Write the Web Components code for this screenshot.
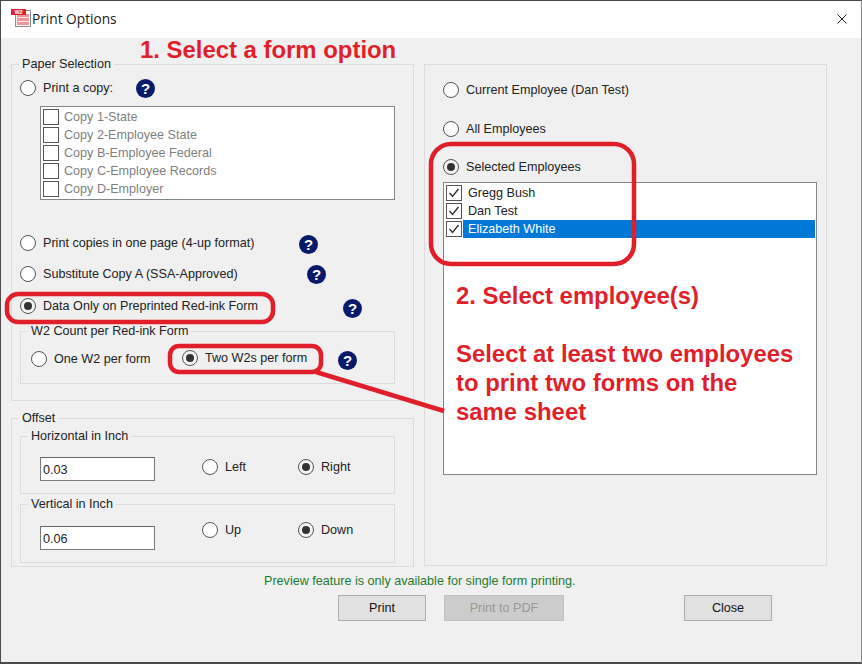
<!DOCTYPE html>
<html>
<head>
<meta charset="utf-8">
<title>Print Options</title>
<style>
html, body { margin: 0; padding: 0; background: #f0f0f0; }
body { font: 12.6px "Liberation Sans", Arial, sans-serif; color: #222; }
</style>
</head>
<body>
<print-dialog>
  <div slot="left">
    <win-group label="Paper Selection" pad="6px 18px 16px 8px">
      <win-row>
        <win-radio style="width:116px">Print a copy:</win-radio><win-help></win-help>
      </win-row>
      <check-list disabled style="margin:8px 0 0 20px;width:350px;height:91px">
        <check-item>Copy 1-State</check-item>
        <check-item>Copy 2-Employee State</check-item>
        <check-item>Copy B-Employee Federal</check-item>
        <check-item>Copy C-Employee Records</check-item>
        <check-item>Copy D-Employer</check-item>
      </check-list>
      <win-row style="margin-top:33px">
        <win-radio style="width:279px">Print copies in one page (4-up format)</win-radio><win-help style="margin-top:3px"></win-help>
      </win-row>
      <win-row style="margin-top:11px">
        <win-radio style="width:287px">Substitute Copy A (SSA-Approved)</win-radio><win-help></win-help>
      </win-row>
      <win-row style="margin-top:12px">
        <win-radio checked style="width:323px">Data Only on Preprinted Red-ink Form</win-radio><win-help style="margin-top:4px"></win-help>
      </win-row>
      <win-group label="W2 Count per Red-ink Form" style="margin-top:15px;height:51px">
        <win-row style="margin:10px 0 0 10px">
          <win-radio style="width:151px">One W2 per form</win-radio>
          <win-radio checked style="width:156px;margin-top:-2px">Two W2s per form</win-radio>
          <win-help style="margin-top:2px"></win-help>
        </win-row>
      </win-group>
    </win-group>
    <win-group label="Offset" pad="10px 18px 3px 8px" style="margin-top:17px">
      <win-group label="Horizontal in Inch" style="height:56px">
        <win-row style="margin:13px 0 0 19px;height:24px">
          <win-input style="width:115px">0.03</win-input>
          <win-radio style="width:96px;margin-left:47px;margin-top:-4px">Left</win-radio>
          <win-radio checked style="margin-top:-4px">Right</win-radio>
        </win-row>
      </win-group>
      <win-group label="Vertical in Inch" style="height:57px;margin-top:10px">
        <win-row style="margin:14px 0 0 19px;height:24px">
          <win-input style="width:115px">0.06</win-input>
          <win-radio style="width:96px;margin-left:47px;margin-top:-16px">Up</win-radio>
          <win-radio checked style="margin-top:-16px">Down</win-radio>
        </win-row>
      </win-group>
    </win-group>
  </div>
  <win-group slot="right" pad="15px 9px 0 18px" style="height:500px">
    <win-row><win-radio>Current Employee (Dan Test)</win-radio></win-row>
    <win-row style="margin-top:19px"><win-radio>All Employees</win-radio></win-row>
    <win-row style="margin-top:18px"><win-radio checked>Selected Employees</win-radio></win-row>
    <check-list style="margin-top:5px;width:369px;height:290px;--text-pad:5px">
      <check-item checked>Gregg Bush</check-item>
      <check-item checked>Dan Test</check-item>
      <check-item checked selected>Elizabeth White</check-item>
    </check-list>
  </win-group>
  <span slot="note">Preview feature is only available for single form printing.</span>
  <win-button slot="buttons" style="width:88px">Print</win-button>
  <win-button slot="buttons" disabled style="width:120px;margin-left:18px">Print to PDF</win-button>
  <win-button slot="buttons" style="width:88px;margin-left:120px">Close</win-button>
</print-dialog>
<help-notes></help-notes>

<script>
class PrintDialog extends HTMLElement {
  constructor() {
    super();
    const shadow = this.attachShadow({ mode: 'open' });
    shadow.innerHTML = `
    <style>
:host { display: block; width: 862px; height: 664px; box-sizing: border-box; background: #f0f0f0; border: 1px solid #4a4a4a; border-right-color: #8a8a8a; border-bottom-width: 2px; overflow: hidden; }
.title { height: 35px; padding-bottom: 2px; background: #fff; display: flex; align-items: center; padding-left: 10px; font: 13.7px "Open Sans", "Liberation Sans", sans-serif; color: #1a1a1a; }
.title svg { margin-right: 0; }
.title span { flex: 1; }
.x { width: 44px; display: flex; justify-content: center; margin-right: -3px; }
.columns { display: flex; gap: 10px; padding: 26px 0 0 10px; }
.columns > div { width: 403px; }
.note { margin: 7px 0 0 263px; height: 14px; line-height: 14px; color: #1c7c2e; }
.buttons { display: flex; margin: 7px 0 0 337px; }
    </style>
    <div class="title">
      <svg width="21" height="21" viewBox="0 0 21 21">
        <rect x="4.500" y="2.500" width="15" height="16" fill="#fff" stroke="#8c8c8c"/>
        <rect x="6" y="6" width="12" height="11" fill="#f0959b"/>
        <rect x="6" y="9" width="12" height="1" fill="#fbe3e4"/>
        <rect x="6" y="13" width="12" height="1" fill="#fbe3e4"/>
        <rect x="0" y="1" width="15" height="6" fill="#e0222c"/>
        <text x="7.500" y="6" font-size="5.500" font-weight="700" font-family="Liberation Sans" fill="#fff" text-anchor="middle">W2</text>
      </svg>
      <span>Print Options</span>
      <div class="x"><svg width="10" height="10" viewBox="0 0 10 10"><path d="M.5.5l9 9M9.500.5l-9 9" stroke="#222" fill="none"/></svg></div>
    </div>
    <div class="columns">
      <div><slot name="left"></slot></div>
      <div><slot name="right"></slot></div>
    </div>
    <div class="note"><slot name="note"></slot></div>
    <div class="buttons"><slot name="buttons"></slot></div>
    `;
  }
}

class WinGroup extends HTMLElement {
  constructor() {
    super();
    const shadow = this.attachShadow({ mode: 'open' });
    const label = this.getAttribute('label');
    const pad = this.getAttribute('pad') || '0';
    shadow.innerHTML = `
    <style>
:host { display: block; border: 1px solid #dcdcdc; }
.legend { display: table; margin: -9px 0 0 7px; padding: 0 3px; height: 16px; line-height: 16px; background: #f0f0f0; color: #222; }
.body { padding: ${pad}; }
    </style>
    ${label ? `<div class="legend">${label}</div>` : ''}
    <div class="body"><slot></slot></div>
    `;
  }
}

class WinRow extends HTMLElement {
  constructor() {
    super();
    const shadow = this.attachShadow({ mode: 'open' });
    shadow.innerHTML = `
    <style>
:host { display: flex; align-items: center; height: 20px; }
    </style>
    <slot></slot>
    `;
  }
}

class WinRadio extends HTMLElement {
  constructor() {
    super();
    const shadow = this.attachShadow({ mode: 'open' });
    shadow.innerHTML = `
    <style>
:host { display: flex; align-items: center; flex: none; white-space: nowrap; }
.dot { width: 16px; height: 16px; box-sizing: border-box; border: 1.5px solid #555; border-radius: 50%; background: #fff; margin-right: 7px; flex: none; display: flex; align-items: center; justify-content: center; }
.dot i { width: 8px; height: 8px; border-radius: 50%; background: #333; display: none; }
:host([checked]) .dot i { display: block; }
:host([checked]) .dot { background: #f4f4f4; }
    </style>
    <span class="dot"><i></i></span><slot></slot>
    `;
  }
}

class WinHelp extends HTMLElement {
  constructor() {
    super();
    const shadow = this.attachShadow({ mode: 'open' });
    shadow.innerHTML = `
    <style>
:host { display: flex; align-items: center; justify-content: center; flex: none; width: 19px; height: 19px; border-radius: 50%; background: #0a1a6a; color: #fff; font: bold 15px "Liberation Sans", sans-serif; }
    </style>
    ?
    `;
  }
}

class CheckList extends HTMLElement {
  constructor() {
    super();
    const shadow = this.attachShadow({ mode: 'open' });
    shadow.innerHTML = `
    <style>
:host { display: block; background: #fff; border: 1px solid #82878c; padding: 1px 1px 0 2px; }
:host([disabled]) { color: #808080; }
    </style>
    <slot></slot>
    `;
  }
}

class CheckItem extends HTMLElement {
  constructor() {
    super();
    const shadow = this.attachShadow({ mode: 'open' });
    shadow.innerHTML = `
    <style>
:host { display: flex; align-items: center; height: 18px; }
.box { width: 16px; height: 16px; box-sizing: border-box; border: 1px solid #555; background: #fff; flex: none; }
.box svg { display: none; }
:host([checked]) .box svg { display: block; }
.text { flex: 1; height: 18px; line-height: 18px; padding-left: var(--text-pad, 4px); margin-left: 1px; }
:host([selected]) .text { background: #0078d7; color: #fff; }
    </style>
    <span class="box"><svg width="14" height="14" viewBox="0 0 14 14"><path d="M2.500 7l3 3.500 6-7.500" fill="none" stroke="#333" stroke-width="1.400"/></svg></span>
    <span class="text"><slot></slot></span>
    `;
  }
}

class WinInput extends HTMLElement {
  constructor() {
    super();
    const shadow = this.attachShadow({ mode: 'open' });
    shadow.innerHTML = `
    <style>
:host { display: block; flex: none; height: 24px; line-height: 24px; box-sizing: border-box; background: #fff; border: 1px solid #7a7a7a; border-top-color: #666; padding-left: 2px; }
    </style>
    <slot></slot>
    `;
  }
}

class WinButton extends HTMLElement {
  constructor() {
    super();
    const shadow = this.attachShadow({ mode: 'open' });
    shadow.innerHTML = `
    <style>
:host { display: flex; align-items: center; justify-content: center; height: 26px; box-sizing: border-box; background: #e1e1e1; border: 1px solid #adadad; color: #111; }
:host([disabled]) { background: #cccccc; border-color: #bfbfbf; color: #999; }
    </style>
    <slot></slot>
    `;
  }
}

// red notes pasted over the screenshot
class HelpNotes extends HTMLElement {
  constructor() {
    super();
    const shadow = this.attachShadow({ mode: 'open' });
    shadow.innerHTML = `
    <style>
:host { position: absolute; left: 0; top: 0; width: 862px; height: 664px; pointer-events: none; font: bold 23.9px "Liberation Sans", Arial, sans-serif; color: #e11f2b; }
svg { position: absolute; left: 0; top: 0; }
.t { position: absolute; white-space: nowrap; line-height: 29px; }
    </style>
    <svg width="862" height="664" fill="none" stroke="#e11f2b" stroke-width="4.500">
      <rect x="431" y="144" width="203" height="120" rx="20"/>
      <rect x="7" y="294" width="266" height="28" rx="11"/>
      <rect x="170" y="346" width="151" height="26" rx="9"/>
      <path d="M316 372L444 411"/>
    </svg>
    <div class="t" style="left:140px;top:35px">1. Select a form option</div>
    <div class="t" style="left:456px;top:281px">2. Select employee(s)</div>
    <div class="t" style="left:456px;top:339px">Select at least two employees<br>to print two forms on the<br>same sheet</div>
    `;
  }
}

customElements.define('print-dialog', PrintDialog);
customElements.define('win-group', WinGroup);
customElements.define('win-row', WinRow);
customElements.define('win-radio', WinRadio);
customElements.define('win-help', WinHelp);
customElements.define('check-list', CheckList);
customElements.define('check-item', CheckItem);
customElements.define('win-input', WinInput);
customElements.define('win-button', WinButton);
customElements.define('help-notes', HelpNotes);
</script>
</body>
</html>
